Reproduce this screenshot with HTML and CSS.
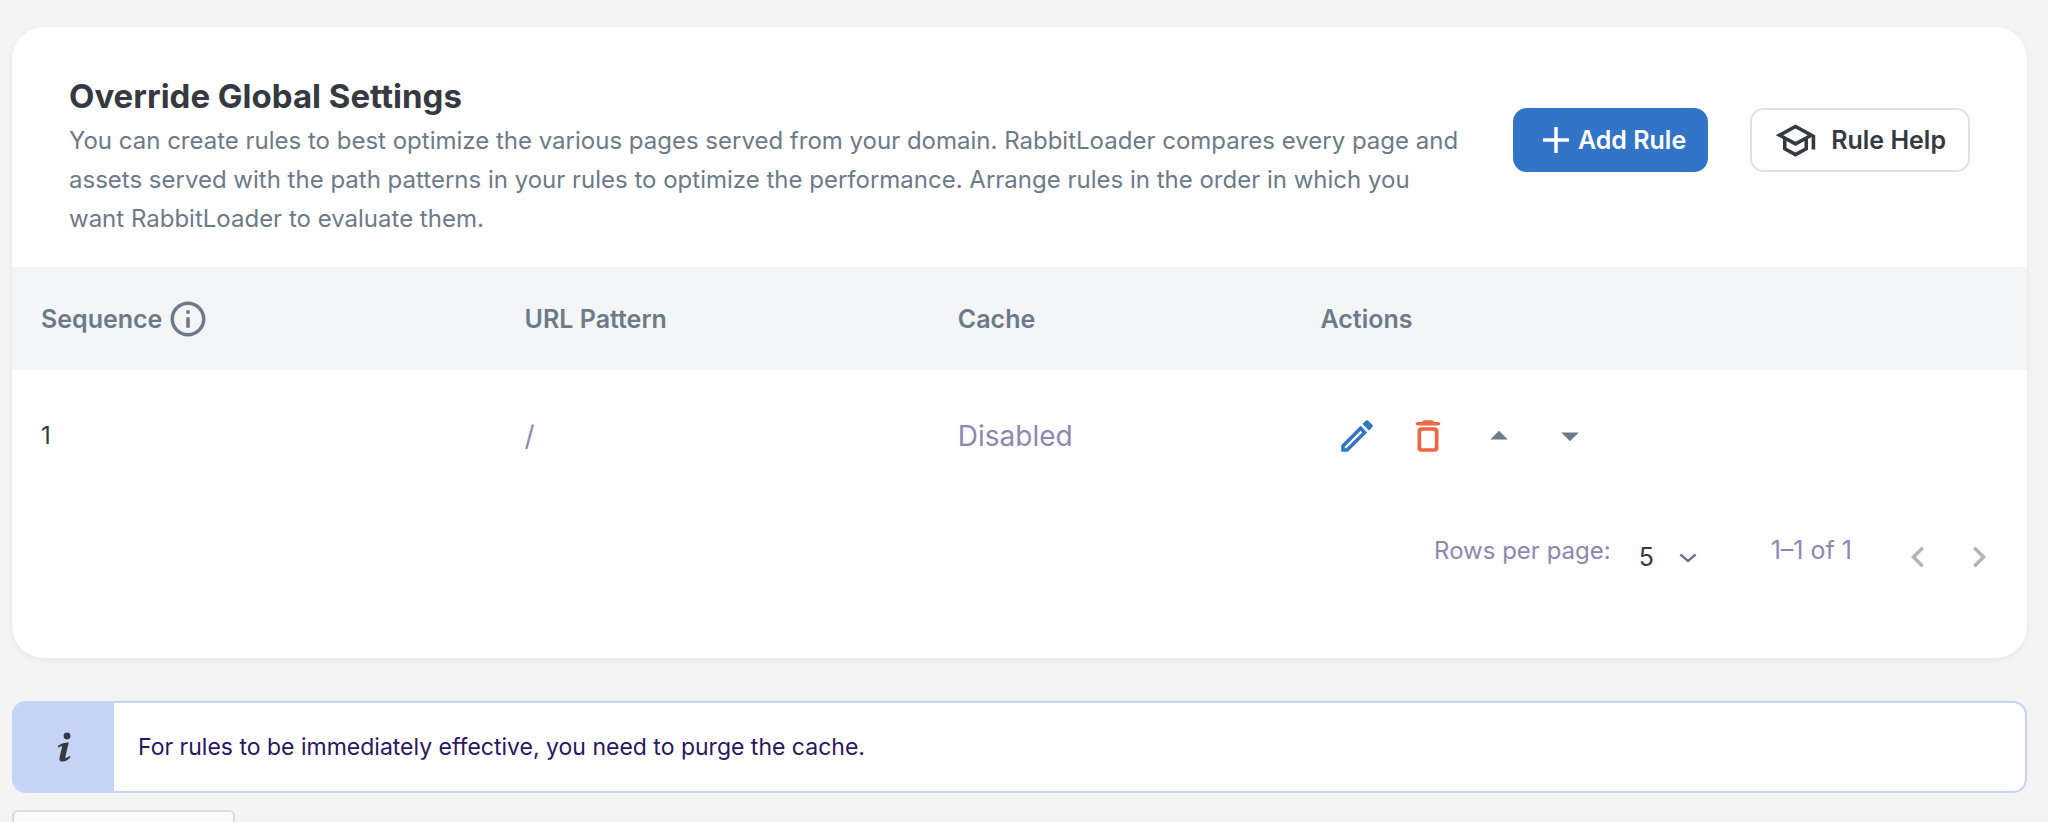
FILE: index.html
```html
<!DOCTYPE html>
<html lang="en">
  <head>
    <meta charset="utf-8">
    <title>Page Rules</title>
    <link rel="stylesheet" href="styles.css">
  </head>
  <body>

    <main class="card">
      <header class="card-header">
        <div class="intro">
          <h1 class="title">Override Global Settings</h1>
          <p class="description">You can create rules to best optimize the various pages served from your domain. RabbitLoader compares every page and assets served with the path patterns in your rules to optimize the performance. Arrange rules in the order in which you want RabbitLoader to evaluate them.</p>
        </div>
        <div class="header-buttons">
          <button class="btn btn-primary" type="button">
            <svg class="plus" viewBox="0 0 26 26"><path d="M13 0v26M0 13h26" fill="none" stroke="currentColor" stroke-width="3.5"/></svg>
            Add Rule
          </button>
          <button class="btn btn-outline" type="button">
            <svg class="hat" viewBox="0 0 24 24"><path d="M12 3 1 9l4 2.18v6L12 21l7-3.82v-6l2-1.09V17h2V9L12 3zm6.82 6L12 12.72 5.18 9 12 5.28 18.82 9zM17 15.99l-5 2.73-5-2.73v-3.72L12 15l5-2.73v3.72z"/></svg>
            Rule Help
          </button>
        </div>
      </header>

      <table class="rules">
        <thead>
          <tr>
            <th class="col-seq">
              <span class="seq">Sequence
                <svg class="info" viewBox="0 0 24 24"><path d="M11 7h2v2h-2zm0 4h2v6h-2zm1-9C6.48 2 2 6.48 2 12s4.48 10 10 10 10-4.48 10-10S17.52 2 12 2zm0 18c-4.41 0-8-3.59-8-8s3.59-8 8-8 8 3.59 8 8-3.59 8-8 8z"/></svg>
              </span>
            </th>
            <th class="col-url">URL Pattern</th>
            <th class="col-cache">Cache</th>
            <th>Actions</th>
          </tr>
        </thead>
        <tbody>
          <tr>
            <td>1</td>
            <td class="muted">/</td>
            <td class="muted">Disabled</td>
            <td>
              <div class="actions">
                <button class="icon-btn edit" type="button" aria-label="Edit rule">
                  <svg viewBox="0 0 24 24"><path d="M14.06 9.02l.92.92L5.92 19H5v-.92l9.06-9.06M17.66 3c-.25 0-.51.1-.7.29l-1.83 1.83 3.75 3.75 1.83-1.83c.39-.39.39-1.02 0-1.41l-2.34-2.34c-.2-.2-.45-.29-.71-.29zm-3.6 3.19L3 17.25V21h3.75L17.81 9.94l-3.75-3.75z"/></svg>
                </button>
                <button class="icon-btn delete" type="button" aria-label="Delete rule">
                  <svg viewBox="0 0 24 24"><path d="M6 19c0 1.1.9 2 2 2h8c1.1 0 2-.9 2-2V9c0-1.1-.9-2-2-2H8c-1.1 0-2 .9-2 2v10zM9 9h6c.5 0 .9.4.9.9v8.2c0 .5-.4.9-.9.9H9c-.5 0-.9-.4-.9-.9V9.900c0-.5.4-.9.9-.9zM15.500 4l-.71-.71c-.18-.18-.44-.29-.7-.29H9.910c-.26 0-.52.11-.7.29L8.500 4H6c-.55 0-1 .45-1 1s.45 1 1 1h12c.55 0 1-.45 1-1s-.45-1-1-1h-2.500z" fill-rule="evenodd"/></svg>
                </button>
                <button class="icon-btn" type="button" aria-label="Move up">
                  <svg viewBox="0 0 24 24"><path d="M7 14l5-5 5 5z"/></svg>
                </button>
                <button class="icon-btn" type="button" aria-label="Move down">
                  <svg viewBox="0 0 24 24"><path d="M7 10l5 5 5-5z"/></svg>
                </button>
              </div>
            </td>
          </tr>
        </tbody>
      </table>

      <footer class="pagination">
        <label class="page-label" for="rows">Rows per page:</label>
        <div class="select-wrap">
          <select class="rows-select" id="rows">
            <option>5</option>
            <option>10</option>
            <option>25</option>
          </select>
          <svg class="select-arrow" viewBox="0 0 18 10"><path d="M2 2l7 6 7-6" fill="none" stroke="currentColor" stroke-width="2.5" stroke-linecap="round" stroke-linejoin="round"/></svg>
        </div>
        <span class="page-label page-count">1–1 of 1</span>
        <button class="page-btn" type="button" aria-label="Previous page" disabled>
          <svg viewBox="0 0 24 24"><path d="M15.41 7.41 14 6l-6 6 6 6 1.41-1.41L10.83 12z"/></svg>
        </button>
        <button class="page-btn" type="button" aria-label="Next page" disabled>
          <svg viewBox="0 0 24 24"><path d="M10 6 8.59 7.41 13.17 12l-4.58 4.59L10 18l6-6z"/></svg>
        </button>
      </footer>
    </main>

    <section class="notice">
      <div class="notice-icon">
        <svg viewBox="0 0 14 30"><circle cx="10" cy="4" r="3.400"/><path d="M.5 14.600C3 11.800 7 10.700 11.800 10.500L8.400 24.500c-.3 1.400.3 1.700 1.200 1.200l3.200-1.700.7 1.300C11 28.300 7.500 29.800 4.800 29.500 2.600 29.200 2 27.600 2.500 25.400L5 15.200c.2-1-.2-1.200-1-.9l-2.700 1.300z"/></svg>
      </div>
      <p class="notice-text">For rules to be immediately effective, you need to purge the cache.</p>
    </section>

    <div class="panel"></div>

  </body>
</html>
```

FILE: styles.css
```css
* {
  box-sizing: border-box;
}

body {
  margin: 0;
  padding: 27px 21px 0 12px;
  min-height: 100vh;
  display: flex;
  flex-direction: column;
  background: #f4f4f4;
  color: #343a40;
  font-family: Inter, "Liberation Sans", sans-serif;
  font-size: 24px;
}

button,
select {
  font: inherit;
  color: inherit;
}

svg {
  display: block;
  fill: currentColor;
}

.card {
  background: #fff;
  border-radius: 32px;
  box-shadow: 0 2px 6px rgba(0, 0, 0, 0.06);
  padding-bottom: 79px;
}

/* header */
.card-header {
  display: flex;
  align-items: flex-start;
  justify-content: space-between;
  padding: 48px 57px 29px;
}

.intro {
  flex: 1;
  max-width: 1396px;
}

.title {
  margin: 0;
  font-size: 33px;
  line-height: 42px;
  font-weight: 700;
}

.description {
  margin: 4px 0 0;
  line-height: 39px;
  color: #6c7a89;
}

.header-buttons {
  display: flex;
  gap: 42px;
  margin-top: 33px;
}

.btn {
  display: flex;
  align-items: center;
  height: 64px;
  border-radius: 14px;
  font-size: 25px;
  font-weight: 600;
  white-space: nowrap;
}

.btn-primary {
  gap: 9px;
  padding: 0 20px 0 28px;
  border: 2px solid #3174c8;
  background: #3174c8;
  color: #fff;
}

.btn-outline {
  gap: 14px;
  padding: 0 22px;
  border: 2px solid #dee2e6;
  background: #fff;
}

.plus {
  width: 26px;
  height: 26px;
}

.hat {
  width: 43px;
  height: 43px;
}

/* rules table */
.rules {
  width: 100%;
  table-layout: fixed;
  border-collapse: collapse;
}

.rules th,
.rules td {
  padding: 0 0 0 29px;
  text-align: left;
}

.rules th {
  height: 103px;
  background: #f3f5f7;
  color: #6c7a89;
  font-size: 25px;
  font-weight: 600;
}

.rules td {
  height: 131px;
}

.rules td.muted {
  color: #8e87b3;
  font-size: 28px;
}

.col-seq {
  width: 24%;
}

.col-url {
  width: 21.5%;
}

.col-cache {
  width: 18%;
}

.seq {
  display: flex;
  align-items: center;
  gap: 5px;
}

.info {
  width: 42px;
  height: 42px;
}

.actions {
  display: flex;
  gap: 29px;
  padding-left: 15px;
}

.icon-btn,
.page-btn {
  width: 42px;
  height: 42px;
  padding: 0;
  border: 0;
  background: none;
  color: #6c7a89;
}

.edit {
  color: #3174c8;
}

.delete {
  color: #f06543;
}

/* pagination */
.pagination {
  display: flex;
  align-items: center;
  justify-content: flex-end;
  padding: 34px 27px 0;
}

.page-label {
  padding-bottom: 14px;
  color: #8e87b3;
}

.select-wrap {
  position: relative;
  margin: 0 72px 0 28px;
}

.rows-select {
  width: 60px;
  height: 42px;
  padding: 0;
  border: 0;
  background: none;
  font-size: 25px;
  appearance: none;
}

.select-arrow {
  position: absolute;
  right: 2px;
  top: 17px;
  width: 18px;
  height: 10px;
  color: #6c7a89;
  pointer-events: none;
}

.page-count {
  margin-right: 45px;
  font-size: 25px;
}

.page-btn {
  color: #adb5bd;
}

.page-btn + .page-btn {
  margin-left: 19px;
}

/* purge notice */
.notice {
  display: flex;
  margin-top: 43px;
  border: 2px solid #c5d3f5;
  border-radius: 14px;
  background: #fff;
  overflow: hidden;
}

.notice-icon {
  display: flex;
  align-items: center;
  justify-content: center;
  width: 100px;
  background: #c5d3f5;
}

.notice-icon svg {
  width: 14px;
  height: 30px;
}

.notice-text {
  margin: 0;
  padding: 0 24px;
  line-height: 88px;
  font-size: 23px;
  color: #2a1662;
}

.panel {
  flex: 1;
  width: 223px;
  margin-top: 17px;
  border: 2px solid #dcdcdc;
  border-bottom: 0;
  border-radius: 6px 6px 0 0;
  background: #fafafa;
}
```
